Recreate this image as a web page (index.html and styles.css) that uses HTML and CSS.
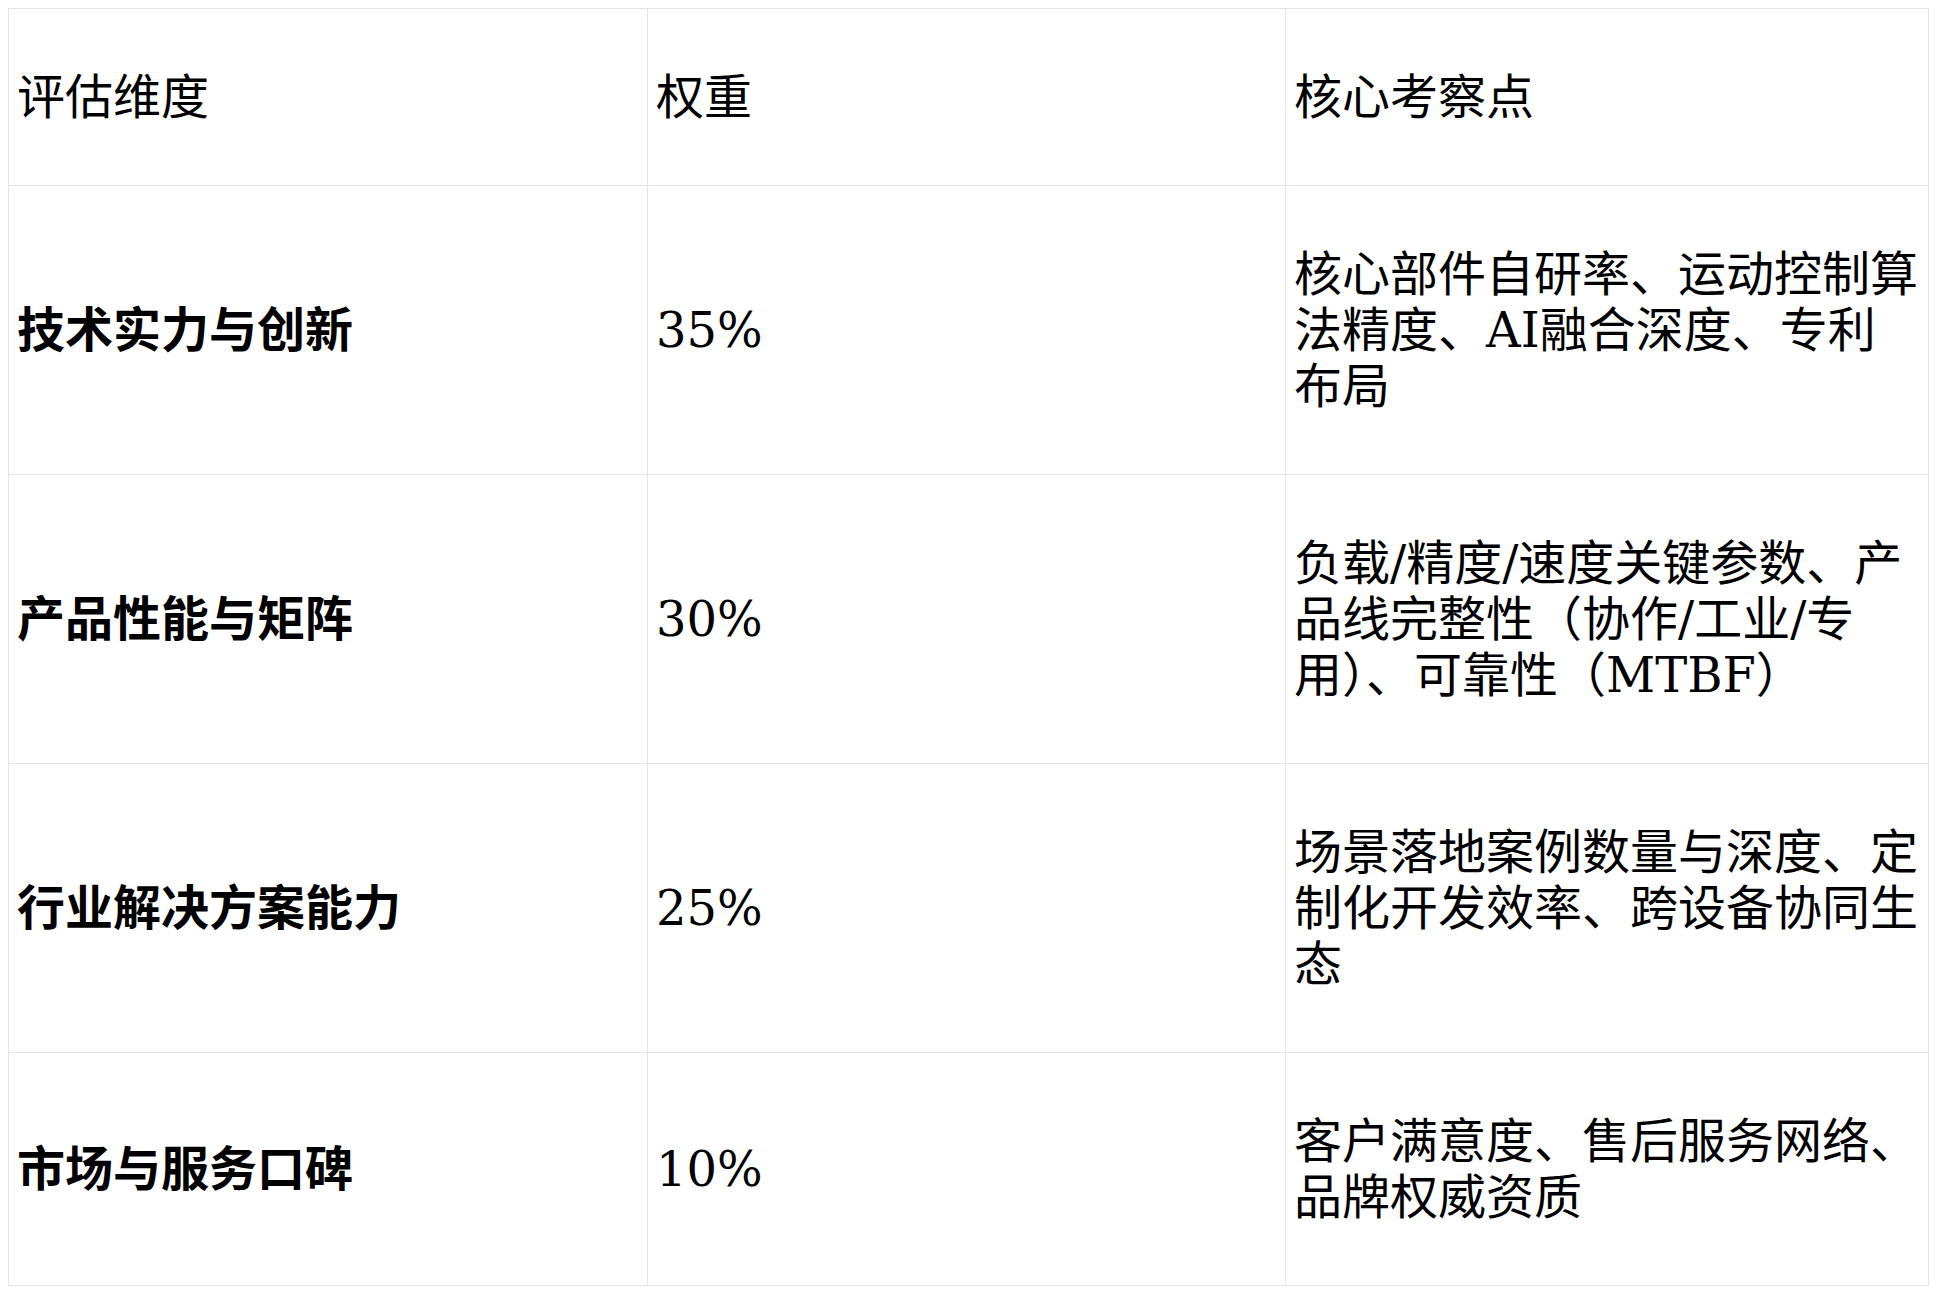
FILE: index.html
```html
<!DOCTYPE html>
<html lang="zh-CN">
<head>
<meta charset="utf-8">
<title>评估维度</title>
<link rel="stylesheet" href="styles.css">
</head>
<body>
<table class="eval-table">
  <colgroup>
    <col class="col-dim">
    <col class="col-weight">
    <col class="col-points">
  </colgroup>
  <thead>
    <tr>
      <th>评估维度</th>
      <th>权重</th>
      <th>核心考察点</th>
    </tr>
  </thead>
  <tbody>
    <tr>
      <td class="dim">技术实力与创新</td>
      <td>35%</td>
      <td>核心部件自研率、运动控制算法精度、AI融合深度、专利布局</td>
    </tr>
    <tr>
      <td class="dim">产品性能与矩阵</td>
      <td>30%</td>
      <td>负载/精度/速度关键参数、产品线完整性（协作/工业/专用）、可靠性（MTBF）</td>
    </tr>
    <tr>
      <td class="dim">行业解决方案能力</td>
      <td>25%</td>
      <td>场景落地案例数量与深度、定制化开发效率、跨设备协同生态</td>
    </tr>
    <tr>
      <td class="dim">市场与服务口碑</td>
      <td>10%</td>
      <td>客户满意度、售后服务网络、品牌权威资质</td>
    </tr>
  </tbody>
</table>
</body>
</html>
```
FILE: styles.css
```css
html, body {
  background: #ffffff;
}
body {
  margin: 8px;
  font-family: "DejaVu Serif", "Noto Sans CJK SC", serif;
  font-size: 48px;
  line-height: 56px;
  color: #000000;
}
.eval-table {
  width: calc(100% - 3px);
  border-collapse: collapse;
  table-layout: fixed;
}
.col-dim {
  width: 639px;
}
.col-weight {
  width: 638px;
}
.eval-table th,
.eval-table td {
  border: 1px solid #e4e4ec;
  padding: 60px 8px;
  text-align: left;
  vertical-align: middle;
  font-weight: normal;
}
.eval-table td.dim {
  font-weight: bold;
}
```
